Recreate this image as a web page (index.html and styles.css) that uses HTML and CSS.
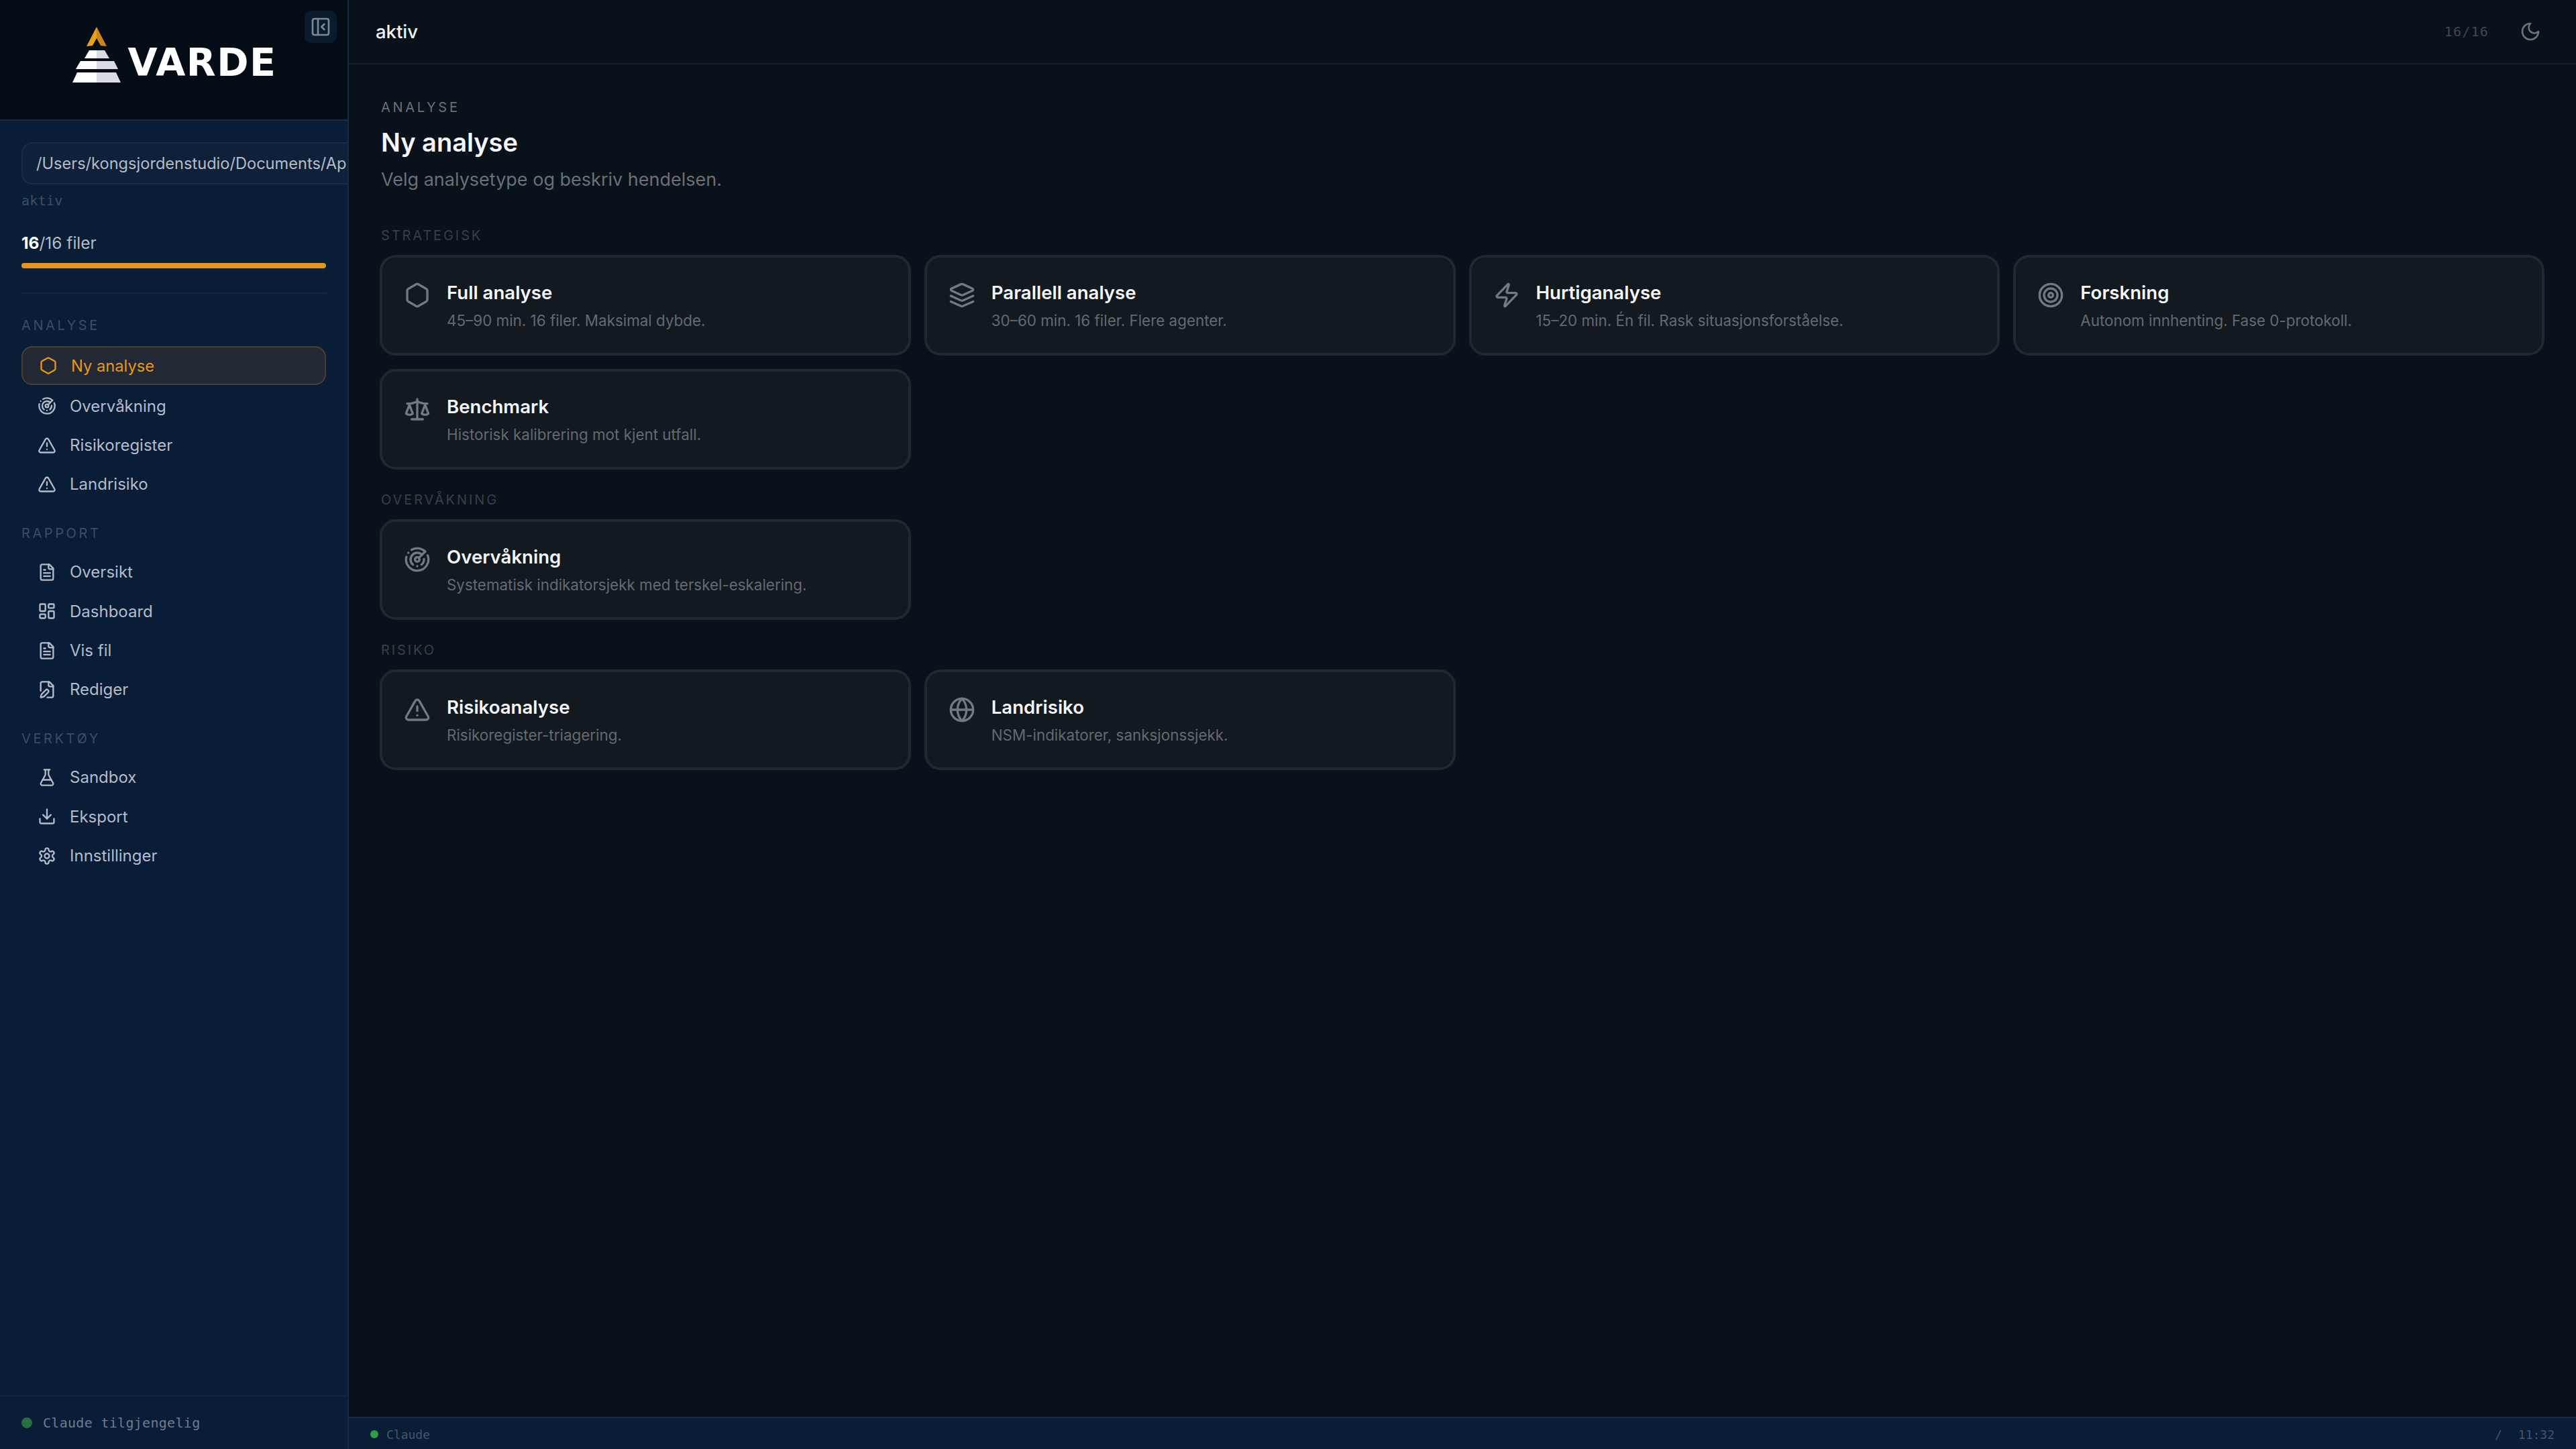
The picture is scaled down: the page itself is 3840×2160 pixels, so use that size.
FILE: index.html
```html
<!DOCTYPE html>
<html lang="no">
<head>
    <meta charset="UTF-8">
    <title>Varde</title>
    <link rel="stylesheet" href="styles.css">
</head>
<body>
    <!-- icon sprite -->
    <svg class="sprite" xmlns="http://www.w3.org/2000/svg">
        <symbol id="i-hexagon" viewBox="0 0 24 24"><path d="M21 16V8a2 2 0 0 0-1-1.73l-7-4a2 2 0 0 0-2 0l-7 4A2 2 0 0 0 3 8v8a2 2 0 0 0 1 1.73l7 4a2 2 0 0 0 2 0l7-4A2 2 0 0 0 21 16z"/></symbol>
        <symbol id="i-radar" viewBox="0 0 24 24"><path d="M19.07 4.93A10 10 0 0 0 6.99 3.34"/><path d="M4 6h.01"/><path d="M2.29 9.62A10 10 0 1 0 21.31 8.35"/><path d="M16.24 7.76A6 6 0 1 0 8.23 16.67"/><path d="M12 18h.01"/><path d="M17.99 11.66A6 6 0 0 1 15.77 16.67"/><circle cx="12" cy="12" r="2"/><path d="m13.41 10.59 5.66-5.66"/></symbol>
        <symbol id="i-alert" viewBox="0 0 24 24"><path d="m21.73 18-8-14a2 2 0 0 0-3.48 0l-8 14A2 2 0 0 0 4 21h16a2 2 0 0 0 1.73-3"/><path d="M12 9v4"/><path d="M12 17h.01"/></symbol>
        <symbol id="i-file" viewBox="0 0 24 24"><path d="M15 2H6a2 2 0 0 0-2 2v16a2 2 0 0 0 2 2h12a2 2 0 0 0 2-2V7Z"/><path d="M14 2v4a2 2 0 0 0 2 2h4"/><path d="M10 9H8"/><path d="M16 13H8"/><path d="M16 17H8"/></symbol>
        <symbol id="i-dashboard" viewBox="0 0 24 24"><rect width="7" height="9" x="3" y="3" rx="1"/><rect width="7" height="5" x="14" y="3" rx="1"/><rect width="7" height="9" x="14" y="12" rx="1"/><rect width="7" height="5" x="3" y="16" rx="1"/></symbol>
        <symbol id="i-file-pen" viewBox="0 0 24 24"><path d="M12.5 22H18a2 2 0 0 0 2-2V7l-5-5H6a2 2 0 0 0-2 2v9.5"/><path d="M14 2v4a2 2 0 0 0 2 2h4"/><path d="M13.378 15.626a1 1 0 1 0-3.004-3.004l-5.01 5.012a2 2 0 0 0-.506.854l-.837 2.87a.5.5 0 0 0 .62.62l2.87-.837a2 2 0 0 0 .854-.506z"/></symbol>
        <symbol id="i-flask" viewBox="0 0 24 24"><path d="M14 2v6a2 2 0 0 0 .245.96l5.51 10.08A2 2 0 0 1 18 22H6a2 2 0 0 1-1.755-2.96l5.51-10.08A2 2 0 0 0 10 8V2"/><path d="M6.453 15h11.094"/><path d="M8.5 2h7"/></symbol>
        <symbol id="i-download" viewBox="0 0 24 24"><path d="M21 15v4a2 2 0 0 1-2 2H5a2 2 0 0 1-2-2v-4"/><polyline points="7 10 12 15 17 10"/><line x1="12" x2="12" y1="15" y2="3"/></symbol>
        <symbol id="i-settings" viewBox="0 0 24 24"><path d="M12.22 2h-.44a2 2 0 0 0-2 2v.18a2 2 0 0 1-1 1.73l-.43.25a2 2 0 0 1-2 0l-.15-.08a2 2 0 0 0-2.73.73l-.22.38a2 2 0 0 0 .73 2.73l.15.1a2 2 0 0 1 1 1.72v.51a2 2 0 0 1-1 1.74l-.15.09a2 2 0 0 0-.73 2.73l.22.38a2 2 0 0 0 2.73.73l.15-.08a2 2 0 0 1 2 0l.43.25a2 2 0 0 1 1 1.73V20a2 2 0 0 0 2 2h.44a2 2 0 0 0 2-2v-.18a2 2 0 0 1 1-1.73l.43-.25a2 2 0 0 1 2 0l.15.08a2 2 0 0 0 2.73-.73l.22-.39a2 2 0 0 0-.73-2.73l-.15-.08a2 2 0 0 1-1-1.74v-.5a2 2 0 0 1 1-1.74l.15-.09a2 2 0 0 0 .73-2.73l-.22-.38a2 2 0 0 0-2.73-.73l-.15.08a2 2 0 0 1-2 0l-.43-.25a2 2 0 0 1-1-1.73V4a2 2 0 0 0-2-2z"/><circle cx="12" cy="12" r="3"/></symbol>
        <symbol id="i-layers" viewBox="0 0 24 24"><path d="M12.83 2.18a2 2 0 0 0-1.66 0L2.6 6.08a1 1 0 0 0 0 1.83l8.58 3.91a2 2 0 0 0 1.66 0l8.58-3.9a1 1 0 0 0 0-1.83Z"/><path d="m22 17.65-9.17 4.16a2 2 0 0 1-1.66 0L2 17.65"/><path d="m22 12.65-9.17 4.16a2 2 0 0 1-1.66 0L2 12.65"/></symbol>
        <symbol id="i-zap" viewBox="0 0 24 24"><path d="M4 14a1 1 0 0 1-.78-1.63l9.9-10.2a.5.5 0 0 1 .86.46l-1.92 6.02A1 1 0 0 0 13 10h7a1 1 0 0 1 .78 1.63l-9.9 10.2a.5.5 0 0 1-.86-.46l1.92-6.02A1 1 0 0 0 11 14z"/></symbol>
        <symbol id="i-target" viewBox="0 0 24 24"><circle cx="12" cy="12" r="10"/><circle cx="12" cy="12" r="6"/><circle cx="12" cy="12" r="2"/></symbol>
        <symbol id="i-scale" viewBox="0 0 24 24"><path d="m16 16 3-8 3 8c-.87.65-1.92 1-3 1s-2.13-.35-3-1Z"/><path d="m2 16 3-8 3 8c-.87.65-1.92 1-3 1s-2.13-.35-3-1Z"/><path d="M7 21h10"/><path d="M12 3v18"/><path d="M3 7h2c2 0 5-1 7-2 2 1 5 2 7 2h2"/></symbol>
        <symbol id="i-globe" viewBox="0 0 24 24"><circle cx="12" cy="12" r="10"/><path d="M12 2a14.5 14.5 0 0 0 0 20 14.5 14.5 0 0 0 0-20"/><path d="M2 12h20"/></symbol>
        <symbol id="i-moon" viewBox="0 0 24 24"><path d="M12 3a6 6 0 0 0 9 9 9 9 0 1 1-9-9Z"/></symbol>
        <symbol id="i-panel" viewBox="0 0 24 24"><rect width="18" height="18" x="3" y="3" rx="2"/><path d="M9 3v18"/><path d="m16 15-3-3 3-3"/></symbol>
    </svg>

    <div class="app">
        <aside class="sidebar">
            <div class="brand">
                <svg class="brand-mark" viewBox="0 0 72 83" xmlns="http://www.w3.org/2000/svg">
                    <polygon points="36,0 36,17 30,28 21,29" fill="#e8a31c"/>
                    <polygon points="36,0 51,29 42,28 36,17" fill="#c9861a"/>
                    <polygon points="25,35 36,35 36,47 18,47" fill="#fff"/>
                    <polygon points="36,35 48,35 55,47 36,47" fill="#d8dbdf"/>
                    <polygon points="12,51 36,51 36,63 5,63" fill="#fff"/>
                    <polygon points="36,51 62,51 68,63 36,63" fill="#d8dbdf"/>
                    <polygon points="7,68 36,68 36,83 0,83" fill="#fff"/>
                    <polygon points="36,68 65,68 72,83 36,83" fill="#d8dbdf"/>
                </svg>
                <span class="brand-name">VARDE</span>
                <button class="collapse-btn"><svg class="icon icon-collapse"><use href="#i-panel"/></svg></button>
            </div>

            <div class="sidebar-body">
                <div class="path-box"><span class="path-text">/Users/kongsjordenstudio/Documents/Ap</span></div>
                <div class="path-status">aktiv</div>
                <div class="file-count"><b>16</b>/16 filer</div>
                <div class="progress"><div class="progress-fill"></div></div>
                <div class="divider"></div>

                <div class="nav-label">ANALYSE</div>
                <nav class="nav-group">
                    <a class="nav-item active"><svg class="icon"><use href="#i-hexagon"/></svg>Ny analyse</a>
                    <a class="nav-item"><svg class="icon"><use href="#i-radar"/></svg>Overvåkning</a>
                    <a class="nav-item"><svg class="icon"><use href="#i-alert"/></svg>Risikoregister</a>
                    <a class="nav-item"><svg class="icon"><use href="#i-alert"/></svg>Landrisiko</a>
                </nav>

                <div class="nav-label">RAPPORT</div>
                <nav class="nav-group">
                    <a class="nav-item"><svg class="icon"><use href="#i-file"/></svg>Oversikt</a>
                    <a class="nav-item"><svg class="icon"><use href="#i-dashboard"/></svg>Dashboard</a>
                    <a class="nav-item"><svg class="icon"><use href="#i-file"/></svg>Vis fil</a>
                    <a class="nav-item"><svg class="icon"><use href="#i-file-pen"/></svg>Rediger</a>
                </nav>

                <div class="nav-label">VERKTØY</div>
                <nav class="nav-group">
                    <a class="nav-item"><svg class="icon"><use href="#i-flask"/></svg>Sandbox</a>
                    <a class="nav-item"><svg class="icon"><use href="#i-download"/></svg>Eksport</a>
                    <a class="nav-item"><svg class="icon"><use href="#i-settings"/></svg>Innstillinger</a>
                </nav>
            </div>

            <div class="sidebar-footer">
                <span class="dot dot-dim"></span>
                <span>Claude tilgjengelig</span>
            </div>
        </aside>

        <div class="main">
            <header class="topbar">
                <span class="topbar-title">aktiv</span>
                <div class="topbar-right">
                    <span class="topbar-count">16/16</span>
                    <svg class="icon icon-moon"><use href="#i-moon"/></svg>
                </div>
            </header>

            <main class="content">
                <div class="eyebrow">ANALYSE</div>
                <h1>Ny analyse</h1>
                <p class="lead">Velg analysetype og beskriv hendelsen.</p>

                <div class="section-label first">STRATEGISK</div>
                <div class="card-grid">
                    <div class="card">
                        <svg class="icon icon-card"><use href="#i-hexagon"/></svg>
                        <div class="card-text"><div class="card-title">Full analyse</div><div class="card-desc">45–90 min. 16 filer. Maksimal dybde.</div></div>
                    </div>
                    <div class="card">
                        <svg class="icon icon-card"><use href="#i-layers"/></svg>
                        <div class="card-text"><div class="card-title">Parallell analyse</div><div class="card-desc">30–60 min. 16 filer. Flere agenter.</div></div>
                    </div>
                    <div class="card">
                        <svg class="icon icon-card"><use href="#i-zap"/></svg>
                        <div class="card-text"><div class="card-title">Hurtiganalyse</div><div class="card-desc">15–20 min. Én fil. Rask situasjonsforståelse.</div></div>
                    </div>
                    <div class="card">
                        <svg class="icon icon-card"><use href="#i-target"/></svg>
                        <div class="card-text"><div class="card-title">Forskning</div><div class="card-desc">Autonom innhenting. Fase 0-protokoll.</div></div>
                    </div>
                    <div class="card">
                        <svg class="icon icon-card"><use href="#i-scale"/></svg>
                        <div class="card-text"><div class="card-title">Benchmark</div><div class="card-desc">Historisk kalibrering mot kjent utfall.</div></div>
                    </div>
                </div>

                <div class="section-label">OVERVÅKNING</div>
                <div class="card-grid">
                    <div class="card">
                        <svg class="icon icon-card"><use href="#i-radar"/></svg>
                        <div class="card-text"><div class="card-title">Overvåkning</div><div class="card-desc">Systematisk indikatorsjekk med terskel-eskalering.</div></div>
                    </div>
                </div>

                <div class="section-label">RISIKO</div>
                <div class="card-grid">
                    <div class="card">
                        <svg class="icon icon-card"><use href="#i-alert"/></svg>
                        <div class="card-text"><div class="card-title">Risikoanalyse</div><div class="card-desc">Risikoregister-triagering.</div></div>
                    </div>
                    <div class="card">
                        <svg class="icon icon-card"><use href="#i-globe"/></svg>
                        <div class="card-text"><div class="card-title">Landrisiko</div><div class="card-desc">NSM-indikatorer, sanksjonssjekk.</div></div>
                    </div>
                </div>
            </main>

            <footer class="statusbar">
                <div class="status-left"><span class="dot dot-small"></span><span>Claude</span></div>
                <div class="status-right"><span>/</span><span>11:32</span></div>
            </footer>
        </div>
    </div>
</body>
</html>
```

FILE: styles.css
```css
* {
    margin: 0;
    padding: 0;
    box-sizing: border-box;
}

body {
    font-family: Inter, "Noto Sans", sans-serif;
    background: #09111a;
    height: 100vh;
    overflow: hidden;
}

.sprite {
    display: none;
}

.app {
    display: flex;
    height: 100vh;
}

.icon {
    width: 28px;
    height: 28px;
    flex-shrink: 0;
    fill: none;
    stroke: currentColor;
    stroke-width: 2;
    stroke-linecap: round;
    stroke-linejoin: round;
}

/* Sidebar */
.sidebar {
    width: 520px;
    flex-shrink: 0;
    display: flex;
    flex-direction: column;
    background: #091d36;
    border-right: 2px solid #172a44;
    overflow: hidden;
}

.brand {
    position: relative;
    height: 180px;
    flex-shrink: 0;
    display: flex;
    justify-content: center;
    gap: 10px;
    padding: 40px 0 0 3px;
    background: #040d16;
    border-bottom: 2px solid #1a2c47;
}

.brand-mark {
    width: 72px;
    height: 83px;
}

.brand-name {
    font-family: "DejaVu Sans", sans-serif;
    font-size: 57px;
    font-weight: 700;
    letter-spacing: 1.5px;
    line-height: 41px;
    margin-top: 33px;
    height: 41px;
    color: #fff;
}

.collapse-btn {
    position: absolute;
    top: 16px;
    right: 16px;
    width: 48px;
    height: 48px;
    display: flex;
    align-items: center;
    justify-content: center;
    border: none;
    border-radius: 10px;
    background: #0b1a2c;
    color: #7d8895;
}

.icon-collapse {
    width: 32px;
    height: 32px;
}

.sidebar-body {
    flex: 1;
    padding: 32px 32px 0;
}

.path-box {
    width: 560px;
    height: 63px;
    display: flex;
    align-items: center;
    padding-left: 20px;
    background: #0e2138;
    border: 2px solid #1a2c45;
    border-radius: 16px;
    color: #b4bcc9;
    font-size: 23.6px;
    white-space: nowrap;
}

.path-status {
    margin-top: 12px;
    height: 24px;
    line-height: 24px;
    font-family: "DejaVu Sans Mono", monospace;
    font-size: 20px;
    letter-spacing: 0.3px;
    color: #3f4f63;
}

.file-count {
    margin-top: 36px;
    height: 30px;
    line-height: 30px;
    font-size: 24.5px;
    color: #b4bcc9;
}

.file-count b {
    font-weight: 700;
    color: #fff;
}

.progress {
    margin-top: 15px;
    height: 12px;
    background: #0f2239;
}

.progress-fill {
    height: 8px;
    border-radius: 4px;
    background: #e4951a;
}

.divider {
    margin-top: 32px;
    height: 2px;
    background: #13263f;
}

.nav-label {
    height: 24px;
    line-height: 24px;
    margin-top: 34px;
    margin-bottom: 19px;
    font-size: 20px;
    letter-spacing: 3.6px;
    color: #3c4c62;
}

.divider + .nav-label {
    margin-top: 35px;
}

.nav-group {
    display: flex;
    flex-direction: column;
    gap: 4.33px;
}

.nav-item {
    height: 54px;
    display: flex;
    align-items: center;
    gap: 20px;
    padding-left: 24px;
    font-size: 24px;
    color: #b4bcc9;
}

.nav-item.active {
    height: 58px;
    background: #222935;
    border: 2px solid #493f30;
    border-radius: 16px;
    color: #e8981a;
    font-size: 23.7px;
}

.sidebar-footer {
    height: 80px;
    flex-shrink: 0;
    display: flex;
    align-items: center;
    gap: 16px;
    padding-left: 32px;
    border-top: 2px solid #13263f;
    font-family: "DejaVu Sans Mono", monospace;
    font-size: 20px;
    letter-spacing: 0.3px;
    color: #6f7c8c;
}

.dot {
    border-radius: 50%;
    flex-shrink: 0;
}

.dot-dim {
    width: 16px;
    height: 16px;
    background: #25703c;
}

.dot-small {
    width: 12px;
    height: 12px;
    background: #2ea043;
}

/* Main area */
.main {
    flex: 1;
    min-width: 0;
    display: flex;
    flex-direction: column;
}

.topbar {
    height: 96px;
    flex-shrink: 0;
    display: flex;
    align-items: center;
    justify-content: space-between;
    padding: 0 52px 0 40px;
    border-bottom: 2px solid #171f28;
}

.topbar-title {
    font-size: 27.5px;
    font-weight: 500;
    color: #eff2f5;
}

.topbar-right {
    display: flex;
    align-items: center;
    gap: 46px;
}

.topbar-count {
    font-family: "DejaVu Sans Mono", monospace;
    font-size: 20px;
    letter-spacing: 1.2px;
    color: #41484f;
}

.icon-moon {
    width: 32px;
    height: 32px;
    color: #6d7278;
}

.content {
    flex: 1;
    padding: 52px 47px 0 46px;
}

.eyebrow {
    height: 24px;
    line-height: 24px;
    margin-left: 2px;
    font-size: 20px;
    letter-spacing: 3.7px;
    color: #6b7075;
}

h1 {
    margin-top: 16px;
    margin-left: 2px;
    height: 48px;
    line-height: 48px;
    font-size: 38px;
    font-weight: 600;
    color: #f4f6f8;
}

.lead {
    margin-top: 14px;
    margin-left: 2px;
    height: 36px;
    line-height: 36px;
    font-size: 27px;
    color: #6b7075;
}

.section-label {
    height: 24px;
    line-height: 24px;
    margin-top: 33px;
    margin-bottom: 17px;
    margin-left: 2px;
    font-size: 20px;
    letter-spacing: 2.9px;
    color: #393f47;
}

.section-label.first {
    margin-top: 53px;
}

.card-grid {
    display: grid;
    grid-template-columns: repeat(4, 1fr);
    gap: 20px;
}

.card {
    height: 150px;
    display: flex;
    gap: 24px;
    padding: 36px 32px 0;
    background: #12191f;
    border: 4px solid #21282f;
    border-radius: 24px;
}

.card-text {
    margin-top: -2px;
}

.icon-card {
    width: 40px;
    height: 40px;
    color: #74797e;
}

.card-title {
    height: 36px;
    line-height: 36px;
    font-size: 27.6px;
    font-weight: 600;
    color: #f4f6f8;
}

.card-desc {
    margin-top: 8px;
    height: 32px;
    line-height: 32px;
    font-size: 22.4px;
    color: #636a72;
}

.statusbar {
    height: 48px;
    flex-shrink: 0;
    display: flex;
    align-items: center;
    justify-content: space-between;
    padding: 2px 32px 0;
    background: #091d36;
    border-top: 2px solid #172a44;
    font-family: "DejaVu Sans Mono", monospace;
    font-size: 18px;
    color: #45556a;
}

.status-left,
.status-right {
    display: flex;
    align-items: center;
}

.status-left {
    gap: 12px;
}

.status-right {
    gap: 24px;
}
```
